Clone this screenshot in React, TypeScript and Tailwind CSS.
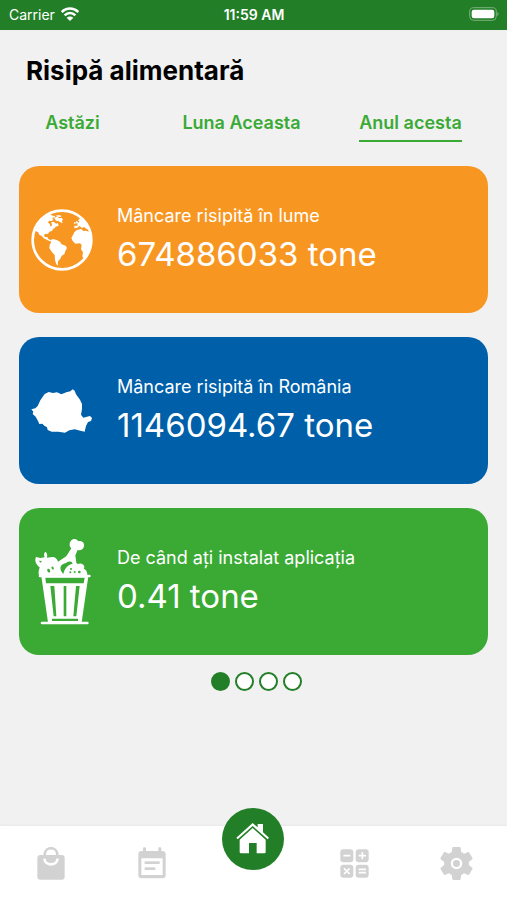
import React from 'react';

interface StatCardProps {
  label: string;
  value: string;
  color: string;
  icon: React.ReactNode;
}

const WifiIcon = () => (
  <svg viewBox="0 0 54 42" className="w-[18px] h-[14px]" fill="none" stroke="currentColor" strokeWidth="7.5">
    <path d="M2 15 C16 1 38 1 52 15" />
    <path d="M11 25 C20 16 34 16 43 25" />
    <path d="M27 42 L17 32 C23 27 31 27 37 32 Z" fill="currentColor" stroke="none" />
  </svg>
);

const BatteryIcon = () => (
  <svg viewBox="0 0 90 42" className="w-[30px] h-[14px]">
    <rect x="2" y="2" width="80" height="38" rx="12" fill="none" stroke="#7bb07d" strokeWidth="3" />
    <rect x="8" y="8" width="68" height="26" rx="7" fill="#fff" />
    <path d="M85 15 C90 17 90 25 85 27 Z" fill="#7bb07d" />
  </svg>
);

const GlobeIcon = () => (
  <svg viewBox="9 11 186 186" className="w-[62px] h-[62px]" fill="currentColor">
    <circle cx="102" cy="104" r="88" fill="none" stroke="currentColor" strokeWidth="8" />
    {/* North America */}
    <path d="M21 82 C25 61 37 42 55 31 L68 27 L75 32 L82 31 L80 36 L72 38 L76 42 L72 47 L63 46 L60 52 L65 55 L68 64 L72 60 L70 51 L77 49 L84 55 L89 53 L92 61 L83 64 L80 69 L75 70 L73 76 L64 79 L60 86 L54 85 L48 88 L50 95 L58 95 L61 101 L69 105 L66 108 L56 103 L47 99 L42 93 L34 88 L30 80 L23 78 Z" />
    <path d="M78 37 L88 34 L94 39 L101 37 L105 43 L101 47 L105 54 L97 51 L91 47 L84 46 Z" />
    <path d="M83 31 L93 29 L101 32 L97 35 L88 34 Z" />
    {/* South America */}
    <path d="M67 105 L75 101 L86 104 L96 109 L101 117 L113 121 L117 128 L112 137 L109 147 L101 151 L97 160 L91 166 L89 174 L91 181 L85 177 L81 165 L80 149 L71 139 L64 128 L65 118 L69 112 Z" />
    {/* Africa and Europe */}
    <path d="M139 81 L146 74 L160 71 L166 77 L174 76 L183 79 C190 92 193 104 190 119 C187 134 178 149 167 160 L163 153 L165 141 L159 132 L161 119 L156 114 L142 115 L134 107 L130 98 L135 89 Z" />
    <path d="M139 69 L139 61 L149 61 L148 55 L154 49 L150 45 L157 38 L165 46 C173 54 180 64 184 75 L175 70 L168 65 L162 68 L155 62 L147 68 Z" />
    <path d="M145 46 L150 50 L149 55 L144 54 Z" />
    <path d="M139 50 L143 50 L142 56 L138 55 Z" />
  </svg>
);

const RomaniaIcon = () => (
  <svg viewBox="50 70 186 132" className="w-[62px] h-[44px]" fill="currentColor">
    <path d="M51 131 L63 128 L70 121 L78 104 L91 85 L103 79 L116 82 L128 80 L141 86 L156 80 L168 77 L175 71 L181 75 L185 86 L197 102 L203 115 L203 130 L200 147 L207 156 L218 153 L227 151 L233 157 L230 166 L221 169 L215 181 L211 198 L198 195 L181 191 L165 194 L152 201 L132 198 L112 198 L100 193 L98 185 L90 180 L84 174 L75 175 L71 166 L64 153 L55 145 L57 138 Z" />
  </svg>
);

const TrashIcon = () => (
  <svg viewBox="54 24 171 261" className="w-[57px] h-[87px]" fill="currentColor">
    {/* bone */}
    <path d="M150 80 L166 55 C159 49 159 38 166 31 C173 24 184 26 187 34 C198 31 206 39 204 49 C202 59 192 63 185 60 L178 76 L181 98 L206 124 L144 134 L130 96 Z" />
    {/* leftovers */}
    <path d="M70 137 C65 128 70 118 71 112 C60 104 55 92 60 81 L73 84 L86 82 C83 75 84 69 88 65 C95 70 94 77 93 83 L109 81 C119 81 124 88 126 95 L151 79 L164 83 L150 103 L146 137 Z" />
    <path d="M144 136 C144 116 155 104 168 108 L177 114 C179 104 188 99 196 101 C204 103 207 110 204 117 C211 119 215 128 214 137 Z" />
    <g fill="#3aaa35">
      <path d="M137 126 C129 111 135 102 150 99 C160 93 167 93 170 101 C155 105 146 114 142 132 Z" />
      <path d="M68 92 L78 93 L74 98 Z" />
      <ellipse cx="98" cy="122" rx="4" ry="6" transform="rotate(-25 98 122)" />
      <ellipse cx="110" cy="114" rx="3" ry="5" transform="rotate(-25 110 114)" />
      <circle cx="165" cy="117" r="3" />
      <circle cx="163" cy="127" r="3" />
      <circle cx="176" cy="126" r="3" />
      <circle cx="190" cy="126" r="4" />
    </g>
    {/* bin */}
    <rect x="68" y="134" width="156" height="8" rx="4" />
    <path fillRule="evenodd" d="M76 139 H217 L197 277 H96 Z M88 143 H206 L203 160 H90 Z M103 168 L113 259 H121 L115 168 Z M143 168 V259 H151 V168 Z M180 168 L172 259 H181 L191 168 Z M108 266 V273 H186 V266 Z" />
    <rect x="74" y="275" width="144" height="8" rx="4" />
  </svg>
);

const BagIcon = () => (
  <svg viewBox="0 0 84 99" className="w-[28px] h-[33px]">
    <rect x="1" y="24" width="82" height="74" rx="9" fill="#d2d2d2" />
    <path d="M23 29 V24 C23 -3 61 -3 61 24 V29" fill="none" stroke="#d2d2d2" strokeWidth="8" />
    <path d="M22 35 C25 58 59 58 62 35" fill="none" stroke="#fff" strokeWidth="8" />
  </svg>
);

const CalendarIcon = () => (
  <svg viewBox="0 0 84 96" className="w-[28px] h-[32px]" fill="#d2d2d2">
    <path fillRule="evenodd" d="M11 12 H73 Q83 12 83 22 V84 Q83 94 73 94 H11 Q1 94 1 84 V22 Q1 12 11 12 Z M10 34 V84 H74 V34 Z" />
    <rect x="15" y="1" width="9" height="16" rx="3" />
    <rect x="61" y="1" width="9" height="16" rx="3" />
    <rect x="20" y="43" width="45" height="8" />
    <rect x="20" y="61" width="32" height="8" />
  </svg>
);

const HomeIcon = () => (
  <svg viewBox="9 12 186 186" className="w-[62px] h-[62px]" fill="#fff">
    <path d="M52 101 L101 57 L116 70 V60 H132 V85 L150 101 L146 106 L101 66 L56 106 Z" />
    <path d="M62 107 L101 72 L140 107 V144 Q140 148 136 148 H113 V117 H90 V148 H66 Q62 148 62 144 Z" />
  </svg>
);

const CalculatorIcon = () => (
  <svg viewBox="0 0 87 87" className="w-[29px] h-[29px]">
    <g fill="#d2d2d2">
      <rect x="1" y="1" width="39" height="39" rx="9" />
      <rect x="47" y="1" width="39" height="39" rx="9" />
      <rect x="1" y="47" width="39" height="39" rx="9" />
      <rect x="47" y="47" width="39" height="39" rx="9" />
    </g>
    <path d="M10 20 H31 M56 20 H78 M67 9 V31 M12 58 L29 75 M29 58 L12 75 M56 61 H78 M56 71 H78" stroke="#fff" strokeWidth="5" />
  </svg>
);

const GearIcon = () => (
  <svg viewBox="2 2 20 20" className="w-[33px] h-[33px]" fill="#d2d2d2">
    <path d="M19.43 12.98c.04-.32.07-.64.07-.98s-.03-.66-.07-.98l2.11-1.65c.19-.15.24-.42.12-.64l-2-3.46c-.12-.22-.39-.3-.61-.22l-2.49 1c-.52-.4-1.08-.73-1.69-.98l-.38-2.65C14.46 2.18 14.25 2 14 2h-4c-.25 0-.46.18-.49.42l-.38 2.65c-.61.25-1.17.59-1.69.98l-2.49-1c-.23-.09-.49 0-.61.22l-2 3.46c-.13.22-.07.49.12.64l2.11 1.65c-.04.32-.07.65-.07.98s.03.66.07.98l-2.11 1.65c-.19.15-.24.42-.12.64l2 3.46c.12.22.39.3.61.22l2.49-1c.52.4 1.08.73 1.69.98l.38 2.65c.03.24.24.42.49.42h4c.25 0 .46-.18.49-.42l.38-2.65c.61-.25 1.17-.59 1.69-.98l2.49 1c.23.09.49 0 .61-.22l2-3.46c.12-.22.07-.49-.12-.64l-2.11-1.65z" />
    <circle cx="12" cy="12" r="2.8" stroke="#fff" strokeWidth="1.4" />
  </svg>
);

const StatCard: React.FC<StatCardProps> = ({ label, value, color, icon }) => (
  <section className={`flex items-center gap-6 h-[147px] rounded-[20px] pl-3 pr-4 text-white ${color}`}>
    <div className="flex w-[62px] shrink-0 justify-center">{icon}</div>
    <div className="flex flex-col gap-1">
      <h2 className="text-[18px] leading-6">{label}</h2>
      <p className="text-[33px] leading-[44px]">{value}</p>
    </div>
  </section>
);

const tabs = ['Astăzi', 'Luna Aceasta', 'Anul acesta'];

const cards: StatCardProps[] = [
  { label: 'Mâncare risipită în lume', value: '674886033 tone', color: 'bg-[#f89622]', icon: <GlobeIcon /> },
  { label: 'Mâncare risipită în România', value: '1146094.67 tone', color: 'bg-[#005fa9]', icon: <RomaniaIcon /> },
  { label: 'De când ați instalat aplicația', value: '0.41 tone', color: 'bg-[#3aaa35]', icon: <TrashIcon /> },
];

export default function App() {
  const [tab, setTab] = React.useState(2);
  const [page, setPage] = React.useState(0);

  return (
    <div className="flex min-h-screen flex-col bg-[#f1f1f1] font-['Inter','Liberation_Sans',sans-serif]">
      <header className="grid h-[30px] grid-cols-3 items-center bg-[#237f27] pl-[9px] pr-2 pb-0.5 text-white">
        <div className="flex items-center gap-1.5 text-[14px]">
          <span>Carrier</span>
          <WifiIcon />
        </div>
        <span className="text-center text-[14px] font-semibold">11:59 AM</span>
        <div className="flex justify-end">
          <BatteryIcon />
        </div>
      </header>

      <main className="flex-1">
        <h1 className="px-[26px] pt-[25px] text-[26px] font-bold leading-8">Risipă alimentară</h1>

        <nav className="-ml-3 mr-3 mt-6 grid grid-cols-3 justify-items-center">
          {tabs.map((name, i) => (
            <button
              key={name}
              onClick={() => setTab(i)}
              className={`border-b-2 pb-[5px] text-[18px] font-semibold leading-6 text-[#3aaa35] ${i === tab ? 'border-[#3aaa35]' : 'border-transparent'}`}
            >
              {name}
            </button>
          ))}
        </nav>

        <div className="mt-6 flex flex-col gap-6 px-[19px]">
          {cards.map((card) => (
            <StatCard key={card.label} {...card} />
          ))}
        </div>

        <div className="mt-[17px] flex justify-center gap-[5px] pl-1.5">
          {[0, 1, 2, 3].map((i) => (
            <button
              key={i}
              aria-label={`Pagina ${i + 1}`}
              onClick={() => setPage(i)}
              className={`h-[19px] w-[19px] rounded-full border-2 border-[#237f27] ${i === page ? 'bg-[#237f27]' : 'bg-white'}`}
            />
          ))}
        </div>
      </main>

      <footer className="grid h-[74px] grid-cols-5 items-center justify-items-center bg-white shadow-[0_-1px_2px_rgba(0,0,0,0.04)]">
        <button aria-label="Cumpărături"><BagIcon /></button>
        <button aria-label="Calendar"><CalendarIcon /></button>
        <button aria-label="Acasă" className="-mt-12 rounded-full bg-[#237f27]"><HomeIcon /></button>
        <button aria-label="Calculator"><CalculatorIcon /></button>
        <button aria-label="Setări"><GearIcon /></button>
      </footer>
    </div>
  );
}
